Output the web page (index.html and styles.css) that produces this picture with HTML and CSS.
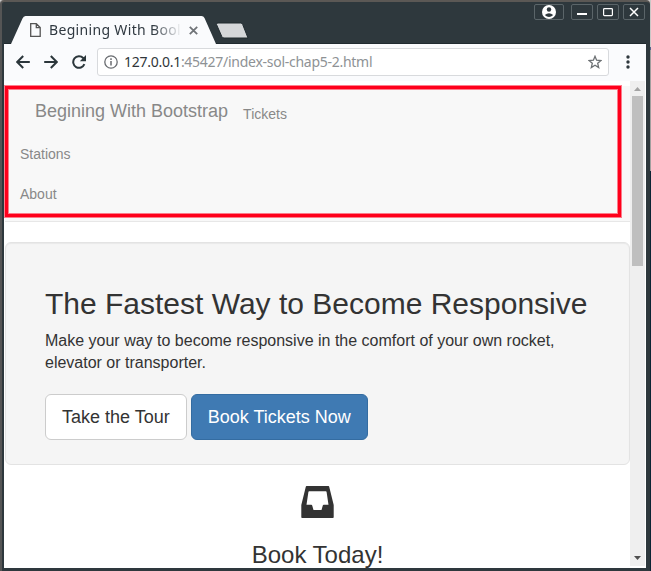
FILE: index.html
```html
<!DOCTYPE html>
<html lang="en">
<head>
<meta charset="utf-8">
<title>Begining With Bootstrap</title>
<link rel="stylesheet" href="styles.css">
</head>
<body>
<div class="window">
  <header class="titlebar">
    <div class="tab">
      <svg class="tab-shape" width="216" height="30" viewBox="0 0 216 30"><path d="M0 30V28H7L18.500 2.500Q19.500 0 21.500 0H197.500Q199.500 0 200.500 2L212 28V30Z" fill="#fafbfd"/></svg>
      <svg class="page-icon" width="11" height="14" viewBox="0 0 11 14"><path d="M.7.7H6.300L10.200 4.600V13.300H.7ZM6.300.7V4.600H10.200" fill="none" stroke="#555" stroke-width="1.300"/></svg>
      <span class="tab-title">Begining With Bool</span>
      <svg class="tab-close" width="9" height="9" viewBox="0 0 9 9"><path d="M.8.8L8.200 8.200M8.200.8L.8 8.200" stroke="#707478" stroke-width="1.800"/></svg>
    </div>
    <svg class="new-tab" width="34" height="17" viewBox="0 0 34 17"><path d="M3 1H25.500Q27 1 27.700 2.500L33 16H9Q7.500 16 6.800 14.500L1.500 2.500Q1 1 3 1Z" fill="#d5d7d9" stroke="#202a2f"/></svg>
    <div class="controls">
      <span class="control user"><svg width="14" height="14" viewBox="0 0 14 14"><circle cx="7" cy="7" r="7" fill="#fff"/><circle cx="7" cy="4.500" r="2.200" fill="#2e383d"/><path d="M2.800 9.900Q7 6.500 11.200 9.900Q7 14 2.800 9.900Z" fill="#2e383d"/></svg></span>
      <span class="control"><svg width="10" height="10" viewBox="0 0 10 10"><path d="M0 7H10" stroke="#fff" stroke-width="2"/></svg></span>
      <span class="control"><svg width="10" height="10" viewBox="0 0 10 10"><rect x=".6" y="1.600" width="8.800" height="7" rx=".8" fill="none" stroke="#fff" stroke-width="1.200"/></svg></span>
      <span class="control"><svg width="10" height="10" viewBox="0 0 10 10"><path d="M1 1L9 9M9 1L1 9" stroke="#fff" stroke-width="1.500"/></svg></span>
    </div>
  </header>
  <div class="toolbar">
    <svg class="nav-icon" width="14" height="14" viewBox="0 0 14 14"><path d="M13.800 7H1.500M7.200 1L1.200 7L7.200 13" fill="none" stroke="#2b363b" stroke-width="2"/></svg>
    <svg class="nav-icon" width="14" height="14" viewBox="0 0 14 14"><path d="M.2 7H12.500M6.800 1L12.800 7L6.800 13" fill="none" stroke="#2b363b" stroke-width="2"/></svg>
    <svg class="nav-icon" width="14" height="14" viewBox="0 0 14 14"><path d="M12.400 9.200A5.800 5.800 0 1 1 11.200 3L12 4" fill="none" stroke="#2b363b" stroke-width="2"/><path d="M14 0V6.200H7.800Z" fill="#2b363b"/></svg>
    <div class="address">
      <svg width="14" height="14" viewBox="0 0 14 14"><circle cx="7" cy="7" r="6.200" fill="none" stroke="#696c70" stroke-width="1.300"/><path d="M7 6V10.500M7 3.300V5" stroke="#696c70" stroke-width="1.500"/></svg>
      <span class="url"><span class="host">127.0.0.1</span>:45427/index-sol-chap5-2.html</span>
      <svg class="star" width="14" height="14" viewBox="0 0 14 14"><path d="M7 1.300L8.600 5.200L13 5.500L9.700 8.300L10.700 12.600L7 10.300L3.300 12.600L4.300 8.300L1 5.500L5.400 5.200Z" fill="none" stroke="#6c7073" stroke-width="1.300"/></svg>
    </div>
    <svg class="menu" width="4" height="14" viewBox="0 0 4 14"><circle cx="2" cy="2" r="1.700"/><circle cx="2" cy="7" r="1.700"/><circle cx="2" cy="12" r="1.700"/></svg>
  </div>
  <div class="viewport">
    <main class="page">
      <nav class="navbar">
        <div class="nav-row"><a class="brand">Begining With Bootstrap</a><a>Tickets</a></div>
        <a class="link">Stations</a>
        <a class="link">About</a>
        <div class="highlight"></div>
      </nav>
      <section class="well">
        <h2>The Fastest Way to Become Responsive</h2>
        <p>Make your way to become responsive in the comfort of your own rocket,<br>elevator or transporter.</p>
        <div class="buttons"><a class="btn">Take the Tour</a><a class="btn primary">Book Tickets Now</a></div>
      </section>
      <section class="feature">
        <svg width="33" height="32" viewBox="0 0 33 32"><path fill="#333" fill-rule="evenodd" d="M5.500 0H27.500Q28 0 28.200.8L32.700 19V31Q32.700 32 32 32H1Q.3 32 .3 31V19L4.800.8Q5 0 5.500 0ZM8.200 5.200Q7.500 5.200 7.400 6L5.500 18.800H10.300Q11 18.800 11.200 19.500L12.500 24H20.500L21.800 19.500Q22 18.800 22.700 18.800H27.500L25.600 6Q25.500 5.200 24.800 5.200Z"/></svg>
        <h3>Book Today!</h3>
      </section>
    </main>
    <aside class="scrollbar">
      <svg width="7" height="4" viewBox="0 0 7 4"><path d="M0 4L3.500 0L7 4Z" fill="#a3a3a3"/></svg>
      <div class="thumb"></div>
      <svg class="down" width="7" height="4" viewBox="0 0 7 4"><path d="M0 0H7L3.500 4Z" fill="#505050"/></svg>
    </aside>
  </div>
</div>
</body>
</html>
```
FILE: styles.css
```css
* { box-sizing: border-box; }
body { margin: 0; width: 651px; height: 571px; overflow: hidden; background: linear-gradient(#c9c7c6 0 47px, #56638a 47px 50px, #a19f9e 50px 171px, #0b2534 171px); font-family: "Liberation Sans", Arial, sans-serif; color: #333; }
svg { display: block; flex: none; }
.window { width: 650px; height: 571px; background: #2e383d; border-top: 2px solid #5b5855; border-left: 2px solid #555; padding: 0 4px 3px 2px; border-radius: 4px 4px 0 0; display: flex; flex-direction: column; }
.titlebar { height: 42px; flex: none; display: flex; box-shadow: inset 0 -1px #202a2f; }
.tab { position: relative; width: 212px; height: 28px; margin-top: 14px; padding-left: 26px; display: flex; align-items: center; }
.tab-shape { position: absolute; left: 0; top: 0; height: 30px; z-index: 0; }
.page-icon, .tab-title, .tab-close { position: relative; }
.tab-title { margin-left: 8px; width: 133px; font: 14px/28px "Noto Sans", sans-serif; letter-spacing: .33px; white-space: nowrap; overflow: hidden; color: #303941; -webkit-mask-image: linear-gradient(to right, #000 78%, transparent 100%); mask-image: linear-gradient(to right, #000 78%, transparent 100%); }
.tab-close { margin-left: 7px; }
.new-tab { margin: 20px 0 0 -1px; }
.controls { margin: 2px 1px 0 auto; display: flex; gap: 4px; height: 16px; }
.control { width: 22px; border: 1px solid #5b6569; border-radius: 2px; display: flex; align-items: center; justify-content: center; }
.user { width: 30px; margin-right: 3px; }
.toolbar { height: 37px; flex: none; background: #fafbfd; display: flex; align-items: center; padding: 0 16px 2px 12px; }
.nav-icon { margin-right: 14px; }
.address { margin-left: -3px; width: 512px; height: 28px; border: 1px solid #d8dadd; border-radius: 3px; background: #fff; display: flex; align-items: center; padding: 0 6px; }
.url { margin-left: 6px; font: 14px/26px "Noto Sans", sans-serif; letter-spacing: -.27px; color: #8e9295; white-space: nowrap; }
.host { color: #30363a; }
.star { margin-left: auto; }
.menu { margin-left: auto; fill: #2e383d; }
.viewport { flex: 1; min-height: 0; background: #fff; display: flex; }
.page { width: 626px; overflow: hidden; padding: 5px 0 0 1px; }
.navbar { position: relative; height: 136px; background: #f8f8f8; border-bottom: 1px solid #e7e7e7; color: #888; font-size: 14px; }
.nav-row { display: flex; height: 51px; padding-left: 30px; line-height: 20px; }
.brand { font-size: 18px; padding-top: 15px; margin-right: 15px; }
.nav-row a:last-child { padding-top: 18px; }
.link { display: block; height: 40px; padding: 7px 15px; line-height: 20px; }
.highlight { position: absolute; left: 0; top: 0; width: 616px; height: 131px; border: 3px solid #ff001b; box-shadow: 0 0 0 1px rgba(255,0,27,.5), inset 0 0 0 1px rgba(255,0,27,.5); }
.well { margin-top: 20px; height: 223px; border: 1px solid #e3e3e3; border-radius: 6px; background: #f5f5f5; padding: 44px 39px 0; box-shadow: inset 0 1px 1px rgba(0,0,0,.05); }
h2, h3, p { margin: 0; font-weight: 400; }
h2 { font-size: 30px; line-height: 33px; white-space: nowrap; }
p { margin-top: 10px; font-size: 16px; line-height: 22px; white-space: nowrap; }
.buttons { display: flex; gap: 4px; margin-top: 20px; }
.btn { height: 46px; border: 1px solid #ccc; border-radius: 6px; padding: 0 16px; font-size: 18px; line-height: 44px; background: #fff; white-space: nowrap; }
.primary { color: #fff; background: #3f7ab3; border-color: #346ca1; }
.feature { display: flex; flex-direction: column; align-items: center; padding-top: 21px; }
h3 { margin-top: 23px; font-size: 24px; line-height: 27px; }
.scrollbar { width: 15px; height: 485px; background: #efefef; display: flex; flex-direction: column; align-items: center; padding: 6px 0; }
.thumb { width: 11px; height: 170px; margin-top: 5px; background: #bfbfbf; }
.down { margin-top: auto; }
```
